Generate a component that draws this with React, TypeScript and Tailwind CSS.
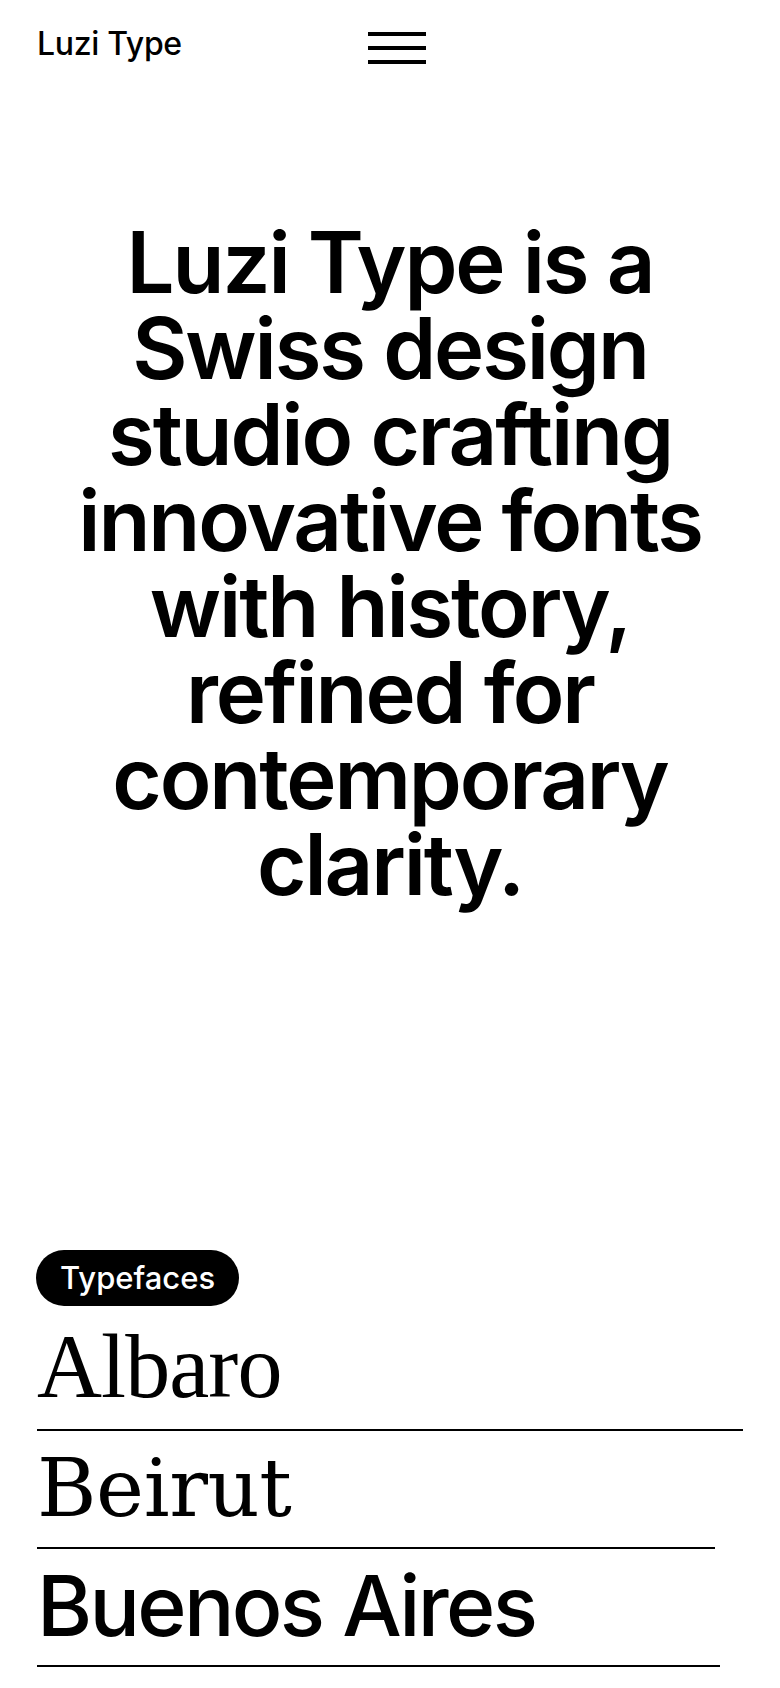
const sans = { fontFamily: '"Inter", "Liberation Sans", sans-serif' };

const lines = [
  'Luzi Type is a',
  'Swiss design',
  'studio crafting',
  'innovative fonts',
  'with history,',
  'refined for',
  'contemporary',
  'clarity.',
];

const typefaces = [
  {
    name: 'Albaro',
    row: 'pt-0 pb-[17px]',
    rule: 'w-[706px]',
    text: 'text-[90px] leading-[90px] tracking-[-0.01em]',
    font: '"Liberation Serif", serif',
  },
  {
    name: 'Beirut',
    row: 'pt-[12px] pb-[14px]',
    rule: 'w-[678px]',
    text: 'text-[81px] leading-[90px] tracking-[-0.005em]',
    font: '"DejaVu Serif", serif',
  },
  {
    name: 'Buenos Aires',
    row: 'pt-[15px] pb-[17px]',
    rule: 'w-[683px]',
    text: 'text-[84px] leading-[84px] font-medium tracking-[-0.032em]',
    font: '"Inter", "Liberation Sans", sans-serif',
  },
];

function Header() {
  return (
    <header className="flex items-start px-[37px] pt-[25px]">
      <a href="#" className="w-[331px] text-[32px] leading-[38px] font-medium tracking-[-0.01em] text-black">
        Luzi Type
      </a>
      <button aria-label="Menu" className="mt-[7px] flex w-[58px] flex-col gap-[10px]">
        <span className="block h-[4px] w-full bg-black" />
        <span className="block h-[4px] w-full bg-black" />
        <span className="block h-[4px] w-full bg-black" />
      </button>
    </header>
  );
}

export default function App() {
  return (
    <div className="min-h-[1688px] bg-white text-black" style={sans}>
      <Header />

      {/* hard breaks keep the same line endings as the original */}
      <h1 className="mt-[156px] text-center text-[85px] leading-[86px] font-semibold tracking-[-0.025em]">
        {lines.map((l, i) => (
          <span key={l}>
            {l}
            {i < lines.length - 1 && <br />}
          </span>
        ))}
      </h1>

      <section className="mt-[342px] px-[37px]">
        <span className="-ml-px inline-flex h-[56px] items-center rounded-full bg-black px-[24px] text-[31px] font-medium text-white">
          Typefaces
        </span>

        <ul className="mt-[16px]">
          {typefaces.map((t) => (
            <li key={t.name} className={`${t.rule} border-b-2 border-black ${t.row}`}>
              <a href="#" className={`block ${t.text}`} style={{ fontFamily: t.font }}>
                {t.name}
              </a>
            </li>
          ))}
        </ul>
      </section>
    </div>
  );
}
